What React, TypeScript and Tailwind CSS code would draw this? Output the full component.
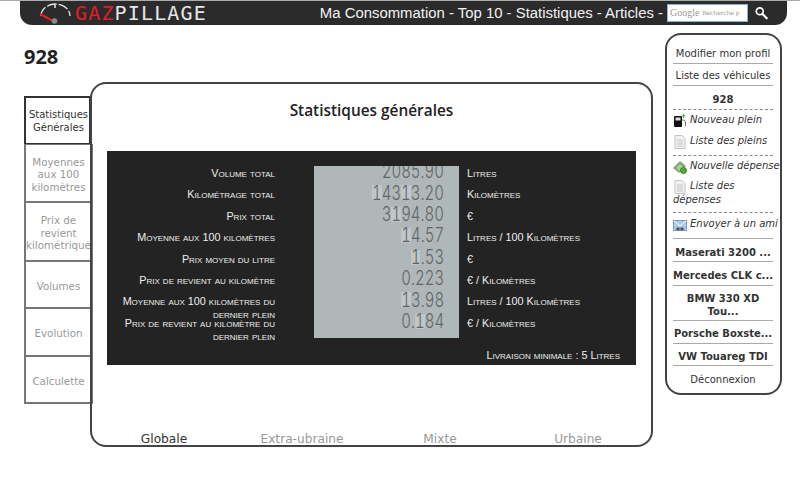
const dejavu = 'font-["DejaVu_Sans",sans-serif]';

const stats = [
  { label: 'Volume total', value: '2085.90', unit: 'Litres' },
  { label: 'Kilométrage total', value: '14313.20', unit: 'Kilomètres' },
  { label: 'Prix total', value: '3194.80', unit: '€' },
  { label: 'Moyenne aux 100 kilomètres', value: '14.57', unit: 'Litres / 100 Kilomètres' },
  { label: 'Prix moyen du litre', value: '1.53', unit: '€' },
  { label: 'Prix de revient au kilomètre', value: '0.223', unit: '€ / Kilomètres' },
  { label: 'Moyenne aux 100 kilomètres du dernier plein', value: '13.98', unit: 'Litres / 100 Kilomètres' },
  { label: 'Prix de revient au kilomètre du dernier plein', value: '0.184', unit: '€ / Kilomètres' },
];

const tabs = [
  { label: 'Moyennes aux 100 kilomètres', h: 'h-[59px]' },
  { label: 'Prix de revient kilométrique', h: 'h-[60px]' },
  { label: 'Volumes', h: 'h-[48px]' },
  { label: 'Evolution', h: 'h-[49px]' },
  { label: 'Calculette', h: 'h-[48px]' },
];

const Logo = () => (
  <div className="flex items-center">
    <svg width="32" height="22" viewBox="0 0 32 22" fill="none">
      <path d="M2 14 A14.5 12 0 0 1 31 14" stroke="#e8e8e8" strokeWidth="1.3" strokeDasharray="10 2" />
      <path d="M16 3v3" stroke="#e8e8e8" strokeWidth="1.5" />
      <path d="M1 12 L14 19" stroke="#e01f26" strokeWidth="2" />
      <circle cx="15.5" cy="19" r="2.8" fill="#8a8a8a" />
    </svg>
    <span className="ml-[4px] font-['DejaVu_Sans_Mono',monospace] text-[20px] leading-none tracking-[1.15px]">
      <span className="text-[#e01f26]">GAZ</span>
      <span className="text-[#e6e6e6]">PILLAGE</span>
    </span>
  </div>
);

const DocIcon = () => (
  <svg width="12" height="14" viewBox="0 0 12 14" className="-my-[3px] mr-[4px] ml-[1px] inline-block align-[-2px]">
    <path d="M1 .5h7l3 3v10H1z" fill="#f1f1f1" stroke="#c4c4c4" />
    <path d="M3 5h6M3 7h6M3 9h6M3 11h6" stroke="#c9c9c9" />
  </svg>
);

const PumpIcon = () => (
  <svg width="12" height="14" viewBox="0 0 12 14" className="-my-[3px] mr-[4px] ml-[1px] inline-block align-[-2px]">
    <rect x="0" y="2" width="8" height="11" rx="1" fill="#111" />
    <rect x="1.5" y="3.5" width="5" height="3" fill="#ddd" />
    <path d="M8 6h2l1.5 2v4" stroke="#777" fill="none" />
    <path d="M9.5 0v4M7.5 2h4" stroke="#3fae3f" />
  </svg>
);

const MoneyIcon = () => (
  <svg width="14" height="14" viewBox="0 0 14 14" className="-my-[3px] mr-[3px] inline-block align-[-2px]">
    <path d="M0 8l7-7 6 5-7 7z" fill="#7fa872" />
    <path d="M3 8l4-4 3 3-4 4z" fill="#a5cf94" />
    <circle cx="10.5" cy="10.5" r="3" fill="#5da53f" stroke="#3d7f2a" />
  </svg>
);

const MailIcon = () => (
  <svg width="14" height="13" viewBox="0 0 14 13" className="-my-[3px] mr-[3px] inline-block align-[-2px]">
    <rect x=".5" y="1.5" width="13" height="10" fill="#a9c8ea" stroke="#7f9fc6" />
    <path d="M1 2l6 5 6-5" stroke="#fff" fill="none" />
    <circle cx="5" cy="10" r="1.8" fill="#555" />
    <circle cx="9" cy="10" r="1.8" fill="#555" />
  </svg>
);

const Lcd = ({ value }: { value: string }) => (
  <div className="relative flex h-[21.4px] items-center justify-end pr-[15px]">
    {/* unlit segments behind the digits */}
    <div className="absolute top-[3px] right-[15px] flex h-[15px]">
      {value.split('').map((c, i) => (
        <div key={i} className={`flex-none ${c === '.' ? 'w-[4.2px]' : 'w-[9.7px]'} ${c === '1' ? 'bg-[#c0c7c7]' : ''}`} />
      ))}
    </div>
    <span className="relative origin-right scale-x-[0.75] font-['Inter',sans-serif] text-[20px] leading-[15px] font-light text-[#5f6666] tabular-nums">
      {value}
    </span>
  </div>
);

export default function App() {
  return (
    <div className={`h-[483px] w-[800px] overflow-hidden bg-white text-[#333] ${dejavu}`}>
      <div className="border-t border-[#aaa] pr-[13px] pl-[20px]">
        <header className="flex h-[24px] items-center justify-between rounded-b-[12px] bg-[#2b2b2b] pr-[19px] pl-[19px]">
          <Logo />
          <div className="flex items-center">
            <nav className="font-['Liberation_Sans',sans-serif] text-[14.9px] whitespace-nowrap text-[#f2f2f2]">
              Ma Consommation - Top 10 - Statistiques - Articles -
            </nav>
            <div className="ml-[4px] flex h-[18px] w-[81px] items-center overflow-hidden border border-[#8fb0d8] bg-white pl-[2px] whitespace-nowrap">
              <span className="font-['Liberation_Serif',serif] text-[10px] text-[#999]">Google</span>
              <span className="ml-[3px] text-[6px] text-[#999]">Recherche p</span>
            </div>
            <svg width="13" height="14" viewBox="0 0 15 15" className="ml-[7px]" fill="none">
              <circle cx="5.5" cy="5.5" r="4" stroke="#fff" strokeWidth="2" />
              <path d="M8.5 8.5L13.5 13.5" stroke="#fff" strokeWidth="2.6" strokeLinecap="round" />
            </svg>
          </div>
        </header>
      </div>

      <div className="flex items-start pr-[18px] pl-[24px]">
        <main className="w-[630px]">
          <h1 className="mt-[18px] h-[39px] font-['Open_Sans',sans-serif] text-[20px] leading-[28px] font-bold text-[#222]">928</h1>
          <div className="flex items-start">
            <div className="mt-[14px] w-[67px] shrink-0">
              <div className="flex h-[49px] items-center justify-center border-2 border-[#333] bg-white pl-[2px] text-center text-[10px] leading-[13px] text-[#333]">
                Statistiques Générales
              </div>
              {tabs.map((t) => (
                <div
                  key={t.label}
                  className={`-mt-px flex ${t.h} w-[69px] items-center justify-center border-2 border-t border-[#777] bg-white pt-[3px] text-center text-[10.3px] leading-[12.5px] text-[#999]`}
                >
                  {t.label}
                </div>
              ))}
            </div>
            <section className="relative mr-[1px] -ml-px flex h-[365px] flex-1 flex-col rounded-[16px] border-2 border-[#444]">
              <h2 className="mt-[15px] text-center font-['Open_Sans',sans-serif] text-[15.4px] leading-[24px] font-semibold text-[#222]">
                Statistiques générales
              </h2>
              <div className="mt-[28px] ml-[15px] h-[214px] w-[529px] bg-[#232323] pt-[15px] font-['Liberation_Sans',sans-serif] text-[#eee]">
                <div className="flex h-[172px]">
                  <div className="-mt-[3px] w-[168px] shrink-0 text-right text-[10.8px] leading-[21.4px] [font-variant:small-caps]">
                    {stats.map((s) => (
                      <div key={s.label} className={s.label.includes('dernier') ? 'h-[21.4px] pt-[4px] leading-[13px]' : 'h-[21.4px]'}>
                        {s.label}
                      </div>
                    ))}
                  </div>
                  <div className="ml-[39px] h-[172px] w-[145px] shrink-0 overflow-hidden bg-[#b0b7b8]">
                    <div className="-mt-[5px]">
                      {stats.map((s) => (
                        <Lcd key={s.label} value={s.value} />
                      ))}
                    </div>
                  </div>
                  <div className="-mt-[3px] ml-[8px] text-[10.8px] [font-variant:small-caps]">
                    {stats.map((s) => (
                      <div key={s.label} className="h-[21.4px] leading-[21.4px]">
                        {s.unit}
                      </div>
                    ))}
                  </div>
                </div>
                <div className="mt-[11px] pr-[16px] text-right text-[10.8px] leading-[13px] [font-variant:small-caps]">
                  Livraison minimale : 5 Litres
                </div>
              </div>
              <div className="mt-auto grid h-[16px] grid-cols-[repeat(4,138px)] pl-[3px] text-center text-[12.2px] leading-[20px] text-[#999]">
                <span className="text-[#333]">Globale</span>
                <span>Extra-ubraine</span>
                <span>Mixte</span>
                <span>Urbaine</span>
              </div>
            </section>
          </div>
        </main>

        <aside className="mt-[8px] ml-[11px] h-[362px] w-[117px] shrink-0 rounded-[16px] border-2 border-[#444] pt-[12px] pr-[7px] pl-[6px] text-[10px] leading-[13px] text-[#333]">
          <div className="border-b border-[#aaa] pb-[3px] text-center">Modifier mon profil</div>
          <div className="border-b border-[#aaa] pt-[5px] pb-[3px] text-center">Liste des véhicules</div>
          <div className="border-b border-dashed border-[#888] pt-[7px] pb-[3px] text-center font-bold">928</div>
          <div className="border-b border-dashed border-[#888] pt-[3px] pb-[8px] italic">
            <div className="pb-[8px]"><PumpIcon />Nouveau plein</div>
            <div><DocIcon />Liste des pleins</div>
          </div>
          <div className="border-b border-dashed border-[#888] pt-[3px] pb-[5px] italic whitespace-nowrap">
            <div className="pb-[7px]"><MoneyIcon />Nouvelle dépense</div>
            <div className="leading-[14px] whitespace-normal"><DocIcon />Liste des dépenses</div>
          </div>
          <div className="border-b border-[#aaa] pt-[4px] pb-[8px] italic whitespace-nowrap"><MailIcon />Envoyer à un ami</div>
          <div className="border-b border-[#aaa] pt-[7px] pb-[2px] text-center font-bold whitespace-nowrap">Maserati 3200 ...</div>
          <div className="border-b border-[#aaa] pt-[7px] pb-[3px] text-center font-bold whitespace-nowrap">Mercedes CLK c...</div>
          <div className="border-b border-[#aaa] pt-[6px] pb-[2px] text-center font-bold">BMW 330 XD Tou...</div>
          <div className="border-b border-[#aaa] pt-[6px] pb-[3px] text-center font-bold whitespace-nowrap">Porsche Boxste...</div>
          <div className="border-b border-[#aaa] pt-[6px] pb-[2px] text-center font-bold whitespace-nowrap">VW Touareg TDI</div>
          <div className="pt-[7px] text-center">Déconnexion</div>
        </aside>
      </div>
    </div>
  );
}
